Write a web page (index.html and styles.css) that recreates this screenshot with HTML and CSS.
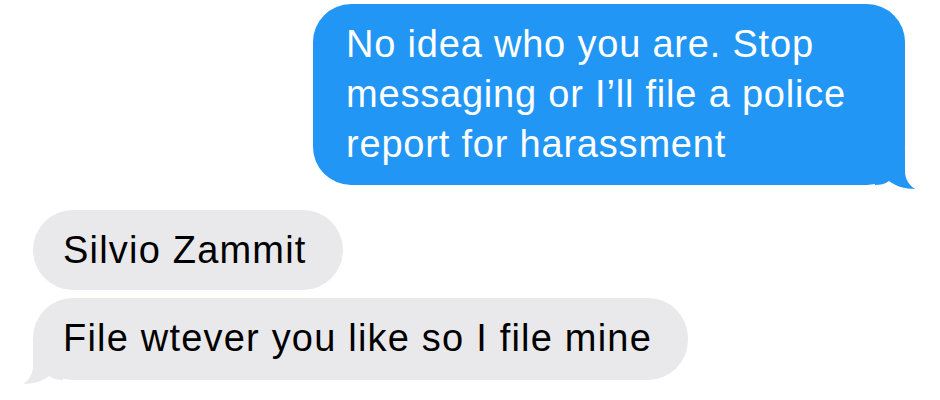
FILE: index.html
```html
<!DOCTYPE html>
<html lang="en">
<head>
    <meta charset="UTF-8">
    <meta name="viewport" content="width=device-width, initial-scale=1.0">
    <title>Messages</title>
    <link rel="stylesheet" href="styles.css">
</head>
<body>
    <div class="thread">
        <div class="bubble sent">
            No idea who you are. Stop messaging or I&rsquo;ll file a police report for harassment
            <svg class="tail" width="40" height="40" viewBox="0 0 40 40"><path d="M0 36 L0 0 L30 0 L30 22 C30 30 34 36 40 40 C30 40 20 37 14 32 C10 35 5 36 0 36 Z"/></svg>
        </div>
        <div class="received-group">
            <div class="bubble received">Silvio Zammit</div>
            <div class="bubble received last">
                File wtever you like so I file mine
                <svg class="tail" width="40" height="40" viewBox="0 0 40 40"><path d="M0 36 L0 0 L30 0 L30 22 C30 30 34 36 40 40 C30 40 20 37 14 32 C10 35 5 36 0 36 Z"/></svg>
            </div>
        </div>
    </div>
</body>
</html>
```
FILE: styles.css
```css
body {
    margin: 0;
    background: #fff;
    font-family: "Liberation Sans", Arial, sans-serif;
}

.thread {
    width: 940px;
    height: 400px;
    display: flex;
    flex-direction: column;
    padding-top: 4px;
    box-sizing: border-box;
    overflow: hidden;
}

.bubble {
    position: relative;
    font-size: 38px;
    line-height: 50px;
    box-sizing: border-box;
}

.tail {
    position: absolute;
    bottom: -4px;
    display: block;
}

.sent {
    align-self: flex-end;
    margin-right: 35px;
    width: 592px;
    padding: 15px 20px 16px 33px;
    background: #2196f5;
    color: #fff;
    letter-spacing: 0.8px;
    border-radius: 38px;
}

.sent .tail {
    right: -10px;
    fill: #2196f5;
}

.received-group {
    display: flex;
    flex-direction: column;
    align-items: flex-start;
    gap: 8px;
    margin-top: 25px;
    margin-left: 33px;
}

.received {
    padding: 15px 36px 15px 30px;
    background: #e9e9eb;
    color: #000;
    letter-spacing: 1.2px;
    border-radius: 40px;
}

.received.last {
    padding-bottom: 17px;
}

.received .tail {
    left: -10px;
    fill: #e9e9eb;
    transform: scaleX(-1);
}
```
